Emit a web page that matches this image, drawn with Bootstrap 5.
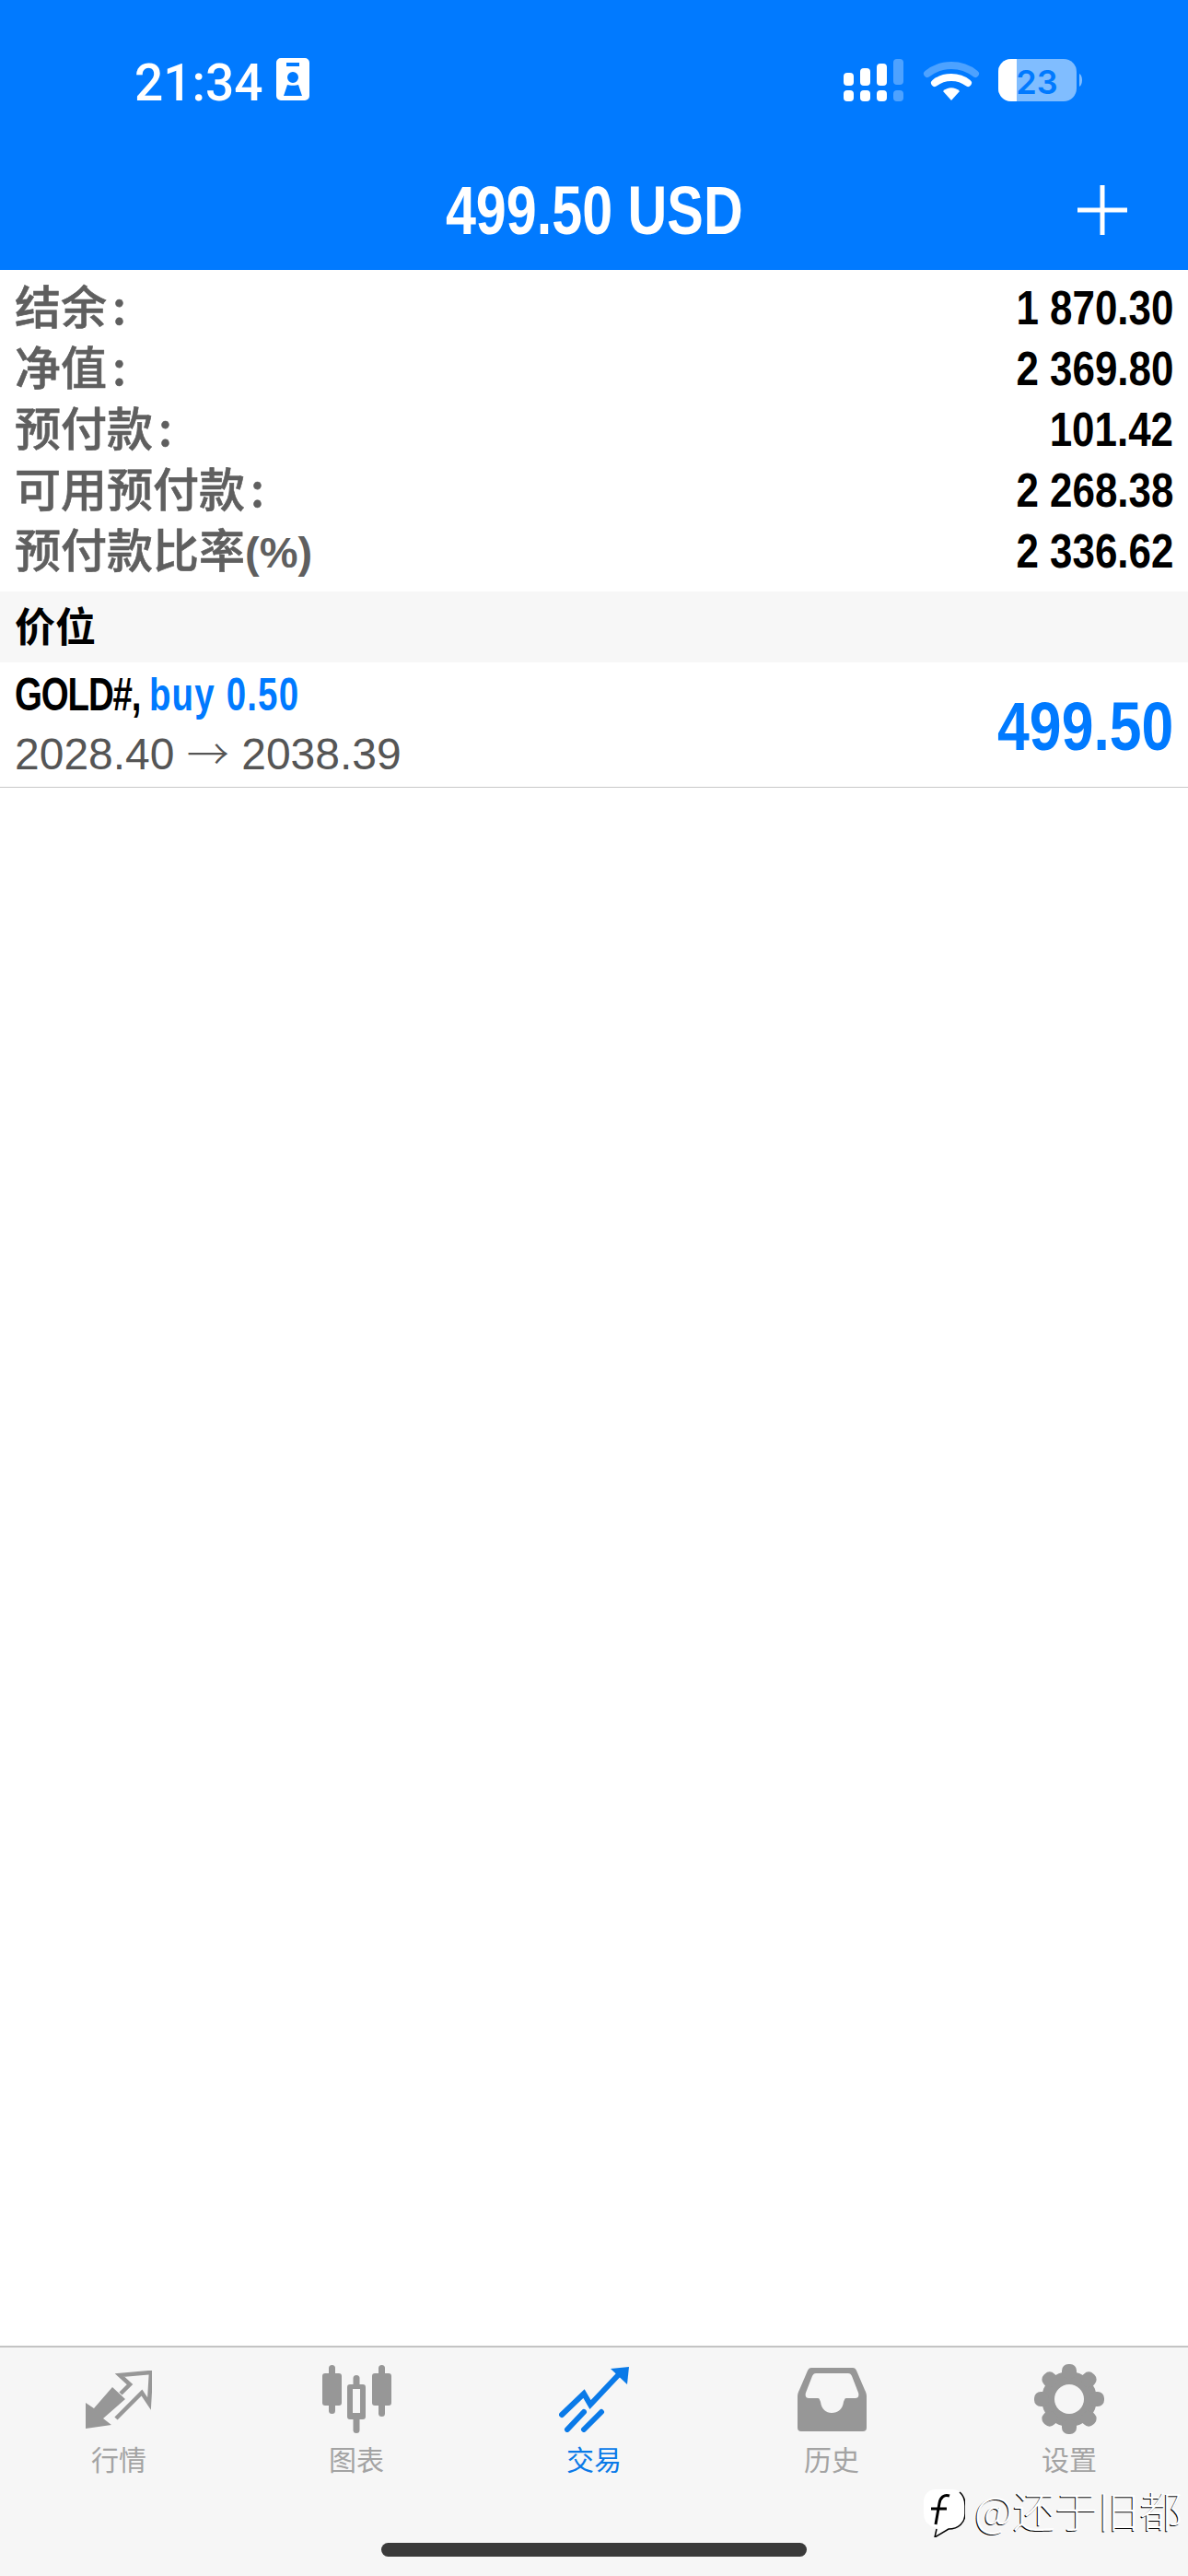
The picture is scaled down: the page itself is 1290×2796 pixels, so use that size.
<!DOCTYPE html>
<html lang="zh-CN">
<head>
  <meta charset="UTF-8">
  <meta name="viewport" content="width=device-width, initial-scale=1">
  <title>交易</title>
  <link href="https://cdn.jsdelivr.net/npm/bootstrap@5.3.0/dist/css/bootstrap.min.css" rel="stylesheet">
  <style>
    body {
      font-family: "Liberation Sans", "Noto Sans CJK SC", sans-serif;
      background-color: #fff;
    }
    .phone-page {
      width: 1290px;
      height: 2796px;
      position: relative;
      overflow: hidden;
    }
    .top-bar {
      background-color: #017aff;
      color: #fff;
      height: 293px;
    }
    .status-row {
      height: 136px;
      padding: 63px 113px 0 146px;
    }
    .clock {
      font-family: Roboto, sans-serif;
      font-weight: 500;
      font-size: 55px;
      line-height: 54px;
    }
    .contact-icon {
      margin-left: 14px;
    }
    .title-row {
      height: 157px;
      padding: 27px 66px 0;
    }
    .title-side {
      width: 54px;
    }
    .title-text {
      font-size: 75px;
      font-weight: 700;
      line-height: 1;
      display: inline-block;
      transform: scaleX(.79);
    }
    .summary {
      padding: 8px 16px 11px;
    }
    .summary-row {
      height: 66px;
    }
    .summary-label {
      font-family: "Noto Sans CJK SC", sans-serif;
      font-weight: 500;
      font-size: 50px;
      line-height: 59px;
      color: #5f5f5f;
      -webkit-text-stroke: .6px #5f5f5f;
    }
    .colon-gap {
      margin-left: 6px;
    }
    .percent-text {
      font-family: "Liberation Sans", sans-serif;
      font-weight: 700;
      font-size: 47px;
      -webkit-text-stroke: 0;
    }
    .squeezed {
      display: inline-block;
      font-weight: 700;
      transform: scaleX(.845);
      transform-origin: right center;
    }
    .summary-value {
      font-size: 52px;
      line-height: 66px;
      color: #000;
    }
    .section-head {
      background-color: #f7f7f7;
      height: 77px;
      padding: 0 16px;
      font-family: "Noto Sans CJK SC", sans-serif;
      font-weight: 700;
      font-size: 44px;
      line-height: 72px;
      color: #000;
    }
    .position-row {
      height: 136px;
      padding: 0 16px;
      border-bottom: 1px solid #c8c8c8;
    }
    .position-name {
      font-size: 50px;
      line-height: 60px;
      font-weight: 700;
      color: #000;
      display: inline-block;
      transform: scaleX(.77);
      transform-origin: left center;
      white-space: nowrap;
    }
    .symbol-name {
      letter-spacing: -1.5px;
    }
    .trade-blue {
      color: #007aff;
      letter-spacing: 1.5px;
    }
    .position-prices {
      font-size: 48px;
      line-height: 62px;
      color: #555;
    }
    .arrow-glyph {
      font-family: "Noto Sans CJK SC", sans-serif;
      font-weight: 300;
      font-size: 46px;
    }
    .position-value {
      font-size: 74px;
      line-height: 1;
      color: #007aff;
      padding-top: 4px;
    }
    .tab-bar {
      background-color: #f6f6f6;
      border-top: 2px solid #c4c4c4;
      height: 250px;
      padding-top: 18px;
    }
    .tab-item {
      width: 258px;
      color: #a3a3a3;
      font-size: 30px;
      line-height: 30px;
    }
    .tab-item.active-tab {
      color: #0a7ae8;
    }
    .tab-icon {
      height: 76px;
      margin-bottom: 14px;
    }
    .home-bar {
      width: 462px;
      height: 15px;
      border-radius: 8px;
      background-color: #3a3a3a;
      margin: 74px auto 0;
    }
    .watermark {
      position: absolute;
      left: 1002px;
      top: 2700px;
      color: #fff;
      font-family: "Noto Sans CJK SC", sans-serif;
      font-weight: 300;
      font-size: 46px;
      line-height: 56px;
      text-shadow: -1px 1px 0 #000;
      white-space: nowrap;
    }
    .watermark-text {
      margin-top: -8px;
      margin-left: 10px;
    }
  </style>
</head>
<body>
  <div class="phone-page d-flex flex-column">

    <div class="top-bar">
      <div class="status-row d-flex justify-content-between">
        <div class="d-flex">
          <span class="clock">21:34</span>
          <svg class="contact-icon" width="36" height="46" viewBox="0 0 36 46">
            <path fill="#fff" fill-rule="evenodd" d="M5 0H31A5 5 0 0 1 36 5V41A5 5 0 0 1 31 46H5A5 5 0 0 1 0 41V5A5 5 0 0 1 5 0ZM11 5V9H25V5ZM18 15A6 6 0 1 0 18 27A6 6 0 1 0 18 15ZM8 41H28L24 29C22 30 14 30 12 29Z"/>
          </svg>
        </div>
        <svg width="262" height="48" viewBox="0 0 262 48">
          <g fill="#fff">
            <rect x="1" y="16" width="11" height="14" rx="4"/>
            <rect x="19" y="11" width="11" height="19" rx="4"/>
            <rect x="37" y="6" width="11" height="24" rx="4"/>
            <rect x="1" y="35" width="11" height="12" rx="4"/>
            <rect x="19" y="35" width="11" height="12" rx="4"/>
            <rect x="37" y="35" width="11" height="12" rx="4"/>
          </g>
          <g fill="#fff" opacity=".3">
            <rect x="55" y="1" width="11" height="28" rx="4"/>
            <rect x="55" y="35" width="11" height="12" rx="4"/>
          </g>
          <path d="M92 17C107 5 129 5 144 17" fill="none" stroke="#fff" stroke-opacity=".3" stroke-width="8" stroke-linecap="round"/>
          <path d="M100 27C110 19 126 19 136 27" fill="none" stroke="#fff" stroke-width="8" stroke-linecap="round"/>
          <path fill="#fff" d="M109 36C114 31 122 31 127 36L118 46Z"/>
          <rect x="169" y="1" width="85" height="46" rx="14" fill="#fff" opacity=".5"/>
          <path fill="#fff" d="M183 1H189V47H183A14 14 0 0 1 169 33V15A14 14 0 0 1 183 1Z"/>
          <path d="M257 17C261 19 261 29 257 31Z" fill="#fff" opacity=".5"/>
          <text x="211" y="39" text-anchor="middle" font-family="Inter, sans-serif" font-weight="600" font-size="36" fill="#017aff">23</text>
        </svg>
      </div>
      <div class="title-row d-flex justify-content-between align-items-center">
        <span class="title-side"></span>
        <span class="title-text">499.50 USD</span>
        <svg class="title-side" width="54" height="54" viewBox="0 0 54 54">
          <path d="M27 0V54M0 27H54" stroke="#fff" stroke-width="5"/>
        </svg>
      </div>
    </div>

    <div class="summary">
      <div class="summary-row d-flex justify-content-between">
        <span class="summary-label">结余<span class="colon-gap">:</span></span>
        <span class="summary-value squeezed">1 870.30</span>
      </div>
      <div class="summary-row d-flex justify-content-between">
        <span class="summary-label">净值<span class="colon-gap">:</span></span>
        <span class="summary-value squeezed">2 369.80</span>
      </div>
      <div class="summary-row d-flex justify-content-between">
        <span class="summary-label">预付款<span class="colon-gap">:</span></span>
        <span class="summary-value squeezed">101.42</span>
      </div>
      <div class="summary-row d-flex justify-content-between">
        <span class="summary-label">可用预付款<span class="colon-gap">:</span></span>
        <span class="summary-value squeezed">2 268.38</span>
      </div>
      <div class="summary-row d-flex justify-content-between">
        <span class="summary-label">预付款比率<span class="percent-text">(%)</span></span>
        <span class="summary-value squeezed">2 336.62</span>
      </div>
    </div>

    <div class="section-head">价位</div>

    <div class="position-row d-flex justify-content-between align-items-center">
      <div>
        <div class="position-name"><span class="symbol-name">GOLD#, </span><span class="trade-blue">buy 0.50</span></div>
        <div class="position-prices">2028.40 <span class="arrow-glyph">→</span> 2038.39</div>
      </div>
      <span class="position-value squeezed">499.50</span>
    </div>

    <div class="flex-grow-1"></div>

    <div class="tab-bar">
      <div class="d-flex">
        <div class="tab-item d-flex flex-column align-items-center">
          <div class="tab-icon d-flex align-items-center">
            <svg width="72" height="63" viewBox="0 0 72 63">
              <path fill="#979797" d="M0 63V35L9 41L29 18L43 31L19 52L28 59Z"/>
              <path fill="none" stroke="#979797" stroke-width="4.5" d="M33 52L61 24L69 36L71 2L37 5L48 15L38 25"/>
            </svg>
          </div>
          <span>行情</span>
        </div>
        <div class="tab-item d-flex flex-column align-items-center">
          <div class="tab-icon d-flex align-items-center">
            <svg width="75" height="74" viewBox="0 0 75 74">
              <g fill="#979797">
                <rect x="7" y="0" width="7" height="53" rx="3.5"/>
                <rect x="0" y="9" width="21" height="35" rx="3"/>
                <rect x="33.500" y="11" width="7" height="63" rx="3.500"/>
                <rect x="61" y="0" width="7" height="56" rx="3.500"/>
                <rect x="54" y="9" width="21" height="35" rx="3"/>
                <path fill-rule="evenodd" d="M30 21H44A3 3 0 0 1 47 24V56A3 3 0 0 1 44 59H30A3 3 0 0 1 27 56V24A3 3 0 0 1 30 21ZM34 26V52H40V26Z"/>
              </g>
              <rect x="33" y="26" width="8" height="26" fill="#f6f6f6"/>
            </svg>
          </div>
          <span>图表</span>
        </div>
        <div class="tab-item active-tab d-flex flex-column align-items-center">
          <div class="tab-icon d-flex align-items-center">
            <svg width="76" height="71" viewBox="0 0 76 71">
              <path d="M3 52L27 29L34 41L67 6M9 68L27 49M27 68L46 49" fill="none" stroke="#0a7ae8" stroke-width="6" stroke-linecap="round"/>
              <path fill="#0a7ae8" d="M56 2L76 0L74 19Z"/>
            </svg>
          </div>
          <span>交易</span>
        </div>
        <div class="tab-item d-flex flex-column align-items-center">
          <div class="tab-icon d-flex align-items-center">
            <svg width="75" height="69" viewBox="0 0 75 69">
              <path fill="#979797" fill-rule="evenodd" d="M15 0H60C62 0 63 1 64 3L73 24C74 26 75 28 75 31V65A4 4 0 0 1 71 69H4A4 4 0 0 1 0 65V31C0 28 1 26 2 24L11 3C12 1 13 0 15 0ZM20 6C18 6 17 7 16 9L9 27C8 30 9 33 12 33H22C24 33 24 35 25 37C26 45 31 49 37 49C44 49 49 45 50 37C51 35 51 33 53 33H63C66 33 67 30 66 27L59 9C58 7 57 6 55 6Z"/>
            </svg>
          </div>
          <span>历史</span>
        </div>
        <div class="tab-item d-flex flex-column align-items-center">
          <div class="tab-icon d-flex align-items-center">
            <svg width="76" height="76" viewBox="0 0 76 76">
              <g fill="#979797">
                <circle cx="38" cy="38" r="30"/>
                <rect x="30" y="0" width="16" height="16" rx="7"/>
                <rect x="30" y="0" width="16" height="16" rx="7" transform="rotate(45 38 38)"/>
                <rect x="30" y="0" width="16" height="16" rx="7" transform="rotate(90 38 38)"/>
                <rect x="30" y="0" width="16" height="16" rx="7" transform="rotate(135 38 38)"/>
                <rect x="30" y="0" width="16" height="16" rx="7" transform="rotate(180 38 38)"/>
                <rect x="30" y="0" width="16" height="16" rx="7" transform="rotate(225 38 38)"/>
                <rect x="30" y="0" width="16" height="16" rx="7" transform="rotate(270 38 38)"/>
                <rect x="30" y="0" width="16" height="16" rx="7" transform="rotate(315 38 38)"/>
              </g>
              <circle cx="38" cy="38" r="16" fill="#f6f6f6"/>
            </svg>
          </div>
          <span>设置</span>
        </div>
      </div>
      <div class="home-bar"></div>
    </div>

    <div class="watermark d-flex align-items-center">
      <svg width="46" height="54" viewBox="0 0 46 54">
        <path fill="#fff" d="M14 2H32C40 2 45 8 45 16V28C45 38 38 44 28 44L16 53L17 44C8 43 1 38 1 28V16C1 8 6 2 14 2Z"/>
        <path d="M40 5C45 9 46 14 46 20V28C46 38 39 45 28 45L13 54L15 45" fill="none" stroke="#000" stroke-width="1.500"/>
        <path d="M29 9C23 7 19 11 18 17L14 40M9 23H26" fill="none" stroke="#000" stroke-width="3"/>
      </svg>
      <span class="watermark-text">@还于旧都</span>
    </div>

  </div>

  <script src="https://cdn.jsdelivr.net/npm/bootstrap@5.3.0/dist/js/bootstrap.bundle.min.js"></script>
</body>
</html>
